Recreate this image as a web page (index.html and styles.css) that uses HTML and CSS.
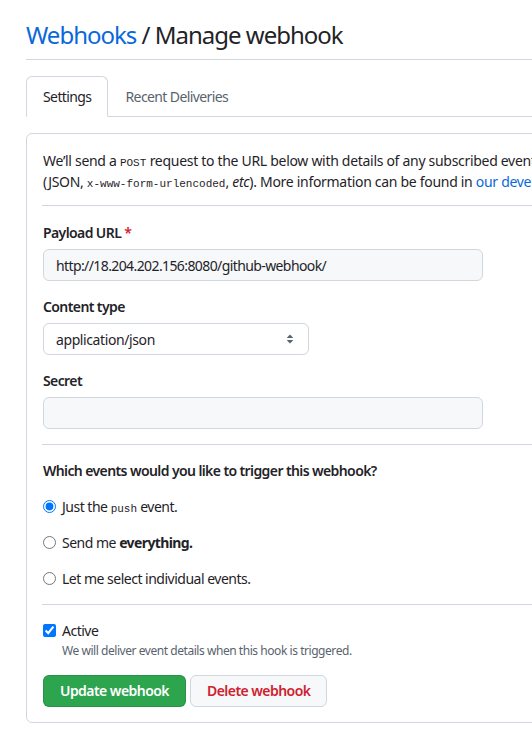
FILE: index.html
```html
<!DOCTYPE html>
<html lang="en">
<head>
<meta charset="utf-8">
<title>Manage webhook</title>
<link rel="stylesheet" href="styles.css">
</head>
<body>
<main class="page">
  <div class="subhead">
    <h2 class="subhead-title"><a class="crumb" href="#">Webhooks</a> / Manage webhook</h2>
  </div>

  <nav class="tabnav">
    <a class="tab tab-selected" href="#">Settings</a>
    <a class="tab" href="#">Recent Deliveries</a>
  </nav>

  <form class="card">
    <p class="intro">
      <span class="line">We’ll send a <code>POST</code> request to the URL below with details of any subscribed events. You can also specify which data format you’d like to receive</span>
      <span class="line">(JSON, <code>x-www-form-urlencoded</code>, <em>etc</em>). More information can be found in <a class="link" href="#">our developer documentation</a>.</span>
    </p>

    <hr class="sep sep-first">

    <div class="field">
      <label class="label" for="url">Payload URL <span class="req">*</span></label>
      <input class="input input-wide" id="url" type="text" value="http://18.204.202.156:8080/github-webhook/">
    </div>

    <div class="field">
      <label class="label" for="ctype">Content type</label>
      <div class="select-wrap">
        <select class="select" id="ctype">
          <option>application/json</option>
          <option>application/x-www-form-urlencoded</option>
        </select>
        <svg class="select-caret" width="8" height="12" viewBox="0 0 8 12" aria-hidden="true">
          <path d="M4 1.5 L7.3 5 H0.7 Z" fill="#59636e"/>
          <path d="M4 10.5 L7.3 7 H0.7 Z" fill="#59636e"/>
        </svg>
      </div>
    </div>

    <div class="field">
      <label class="label" for="secret">Secret</label>
      <input class="input input-wide" id="secret" type="password" value="">
    </div>

    <hr class="sep">

    <div class="field">
      <div class="label label-q">Which events would you like to trigger this webhook?</div>
    </div>
    <div class="options">
      <label class="option"><input type="radio" name="ev" checked> <span>Just the <code>push</code> event.</span></label>
      <label class="option"><input type="radio" name="ev"> <span>Send me <strong>everything.</strong></span></label>
      <label class="option"><input type="radio" name="ev"> <span>Let me select individual events.</span></label>
    </div>

    <hr class="sep">

    <div class="active">
      <label class="option"><input type="checkbox" checked> <span>Active</span></label>
      <p class="note">We will deliver event details when this hook is triggered.</p>
    </div>

    <div class="actions">
      <button type="button" class="btn btn-primary">Update webhook</button>
      <button type="button" class="btn btn-danger">Delete webhook</button>
    </div>
  </form>
</main>
</body>
</html>
```

FILE: styles.css
```css
html, body {
  margin: 0;
  padding: 0;
  overflow: hidden;
  background: #ffffff;
}

body {
  font-family: "Noto Sans", "Liberation Sans", sans-serif;
  font-size: 14px;
  line-height: 21px;
  letter-spacing: -0.3px;
  color: #1f2328;
}

.page {
  width: 880px;
  padding: 17px 0 0 26px;
}

.subhead {
  border-bottom: 1px solid #d0d7de;
  padding-bottom: 6px;
  margin-bottom: 16px;
}

.subhead-title {
  margin: 0;
  font-size: 24px;
  line-height: 36px;
  font-weight: 400;
  letter-spacing: -1px;
  color: #1f2328;
}

.crumb {
  color: #0969da;
  text-decoration: none;
}

.tabnav {
  display: flex;
  border-bottom: 1px solid #d0d7de;
  margin-bottom: 16px;
}

.tab {
  padding: 8px 16px;
  line-height: 23px;
  font-size: 14px;
  letter-spacing: -0.6px;
  color: #59636e;
  text-decoration: none;
  border: 1px solid transparent;
  border-radius: 6px 6px 0 0;
  margin-bottom: -1px;
}

.tab-selected {
  color: #1f2328;
  border-color: #d0d7de;
  border-bottom-color: #ffffff;
  background: #ffffff;
}

.card {
  border: 1px solid #d0d7de;
  border-radius: 6px;
  padding: 16px 16px 15px 16px;
}

.intro {
  margin: 0;
}

.line {
  display: block;
  white-space: nowrap;
  height: 21px;
}

code {
  font-family: "Liberation Mono", "DejaVu Sans Mono", monospace;
  font-size: 11px;
  line-height: 1;
  letter-spacing: 0;
}

.link {
  color: #0969da;
  text-decoration: none;
}

.sep {
  border: 0;
  border-top: 1px solid #d0d7de;
  height: 0;
  margin: 15px -1px 15px -1px;
}

.sep-first {
  margin-top: 13px;
  margin-bottom: 16px;
}

.field {
  margin-bottom: 15px;
}

.label {
  display: block;
  font-weight: 600;
  letter-spacing: -0.6px;
  margin-bottom: 6px;
}

.label-q {
  margin-bottom: 0;
}

strong {
  letter-spacing: -0.6px;
}

.req {
  color: #cf222e;
}

.input {
  display: block;
  box-sizing: border-box;
  height: 32px;
  padding: 5px 12px;
  font-family: inherit;
  font-size: 14px;
  letter-spacing: -0.6px;
  color: #1f2328;
  background: #f6f8fa;
  border: 1px solid #d0d7de;
  border-radius: 6px;
  outline: none;
}

.input-wide {
  width: 440px;
}

.select-wrap {
  position: relative;
  width: 266px;
}

.select {
  display: block;
  box-sizing: border-box;
  width: 266px;
  height: 32px;
  padding: 5px 24px 5px 12px;
  font-family: inherit;
  font-size: 14px;
  letter-spacing: -0.4px;
  color: #1f2328;
  background: #ffffff;
  border: 1px solid #d0d7de;
  border-radius: 6px;
  appearance: none;
  -webkit-appearance: none;
  outline: none;
}

.select-caret {
  position: absolute;
  right: 15px;
  top: 10px;
  pointer-events: none;
}

.options {
  display: flex;
  flex-direction: column;
  gap: 15px;
}

.option {
  display: flex;
  align-items: center;
  height: 21px;
  letter-spacing: -0.5px;
  color: #1f2328;
}

.option input {
  margin: 0 6px 0 0;
  width: 13px;
  height: 13px;
}

.active {
  margin-bottom: 15px;
}

.note {
  margin: 1px 0 0 19px;
  font-size: 12px;
  line-height: 18px;
  letter-spacing: -0.45px;
  color: #59636e;
}

.actions {
  display: flex;
  gap: 4px;
}

.btn {
  box-sizing: border-box;
  height: 32px;
  padding: 5px 16px;
  font-family: inherit;
  font-size: 14px;
  font-weight: 600;
  line-height: 20px;
  letter-spacing: -0.55px;
  border-radius: 6px;
  cursor: pointer;
}

.btn-primary {
  color: #ffffff;
  background: #2da44e;
  border: 1px solid rgba(31, 35, 40, 0.15);
}

.btn-danger {
  color: #cf222e;
  background: #f6f8fa;
  border: 1px solid #d0d7de;
}
```
